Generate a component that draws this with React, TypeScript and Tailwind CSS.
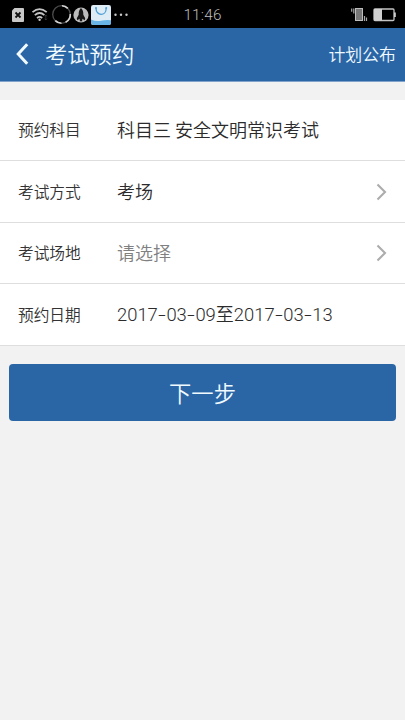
import type { ReactNode } from "react";

interface Field {
  label: string;
  value: ReactNode;
  placeholder?: boolean;
  selectable?: boolean;
}

const fields: Field[] = [
  { label: "预约科目", value: "科目三 安全文明常识考试" },
  { label: "考试方式", value: "考场", selectable: true },
  { label: "考试场地", value: "请选择", placeholder: true, selectable: true },
  {
    label: "预约日期",
    value: (
      <>
        <DateText>2017-03-09</DateText>至<DateText>2017-03-13</DateText>
      </>
    ),
  },
];

// Split on the hyphens so they can be drawn wider than the font's own.
function DateText({ children }: { children: string }) {
  return (
    <span className="font-['Roboto','Liberation_Sans',sans-serif] text-[18.4px]">
      {children.split("-").map((part, i) => (
        <span key={i}>
          {i > 0 && <span className="inline-block w-[8.6px] origin-left scale-x-150">-</span>}
          {part}
        </span>
      ))}
    </span>
  );
}

function StatusBar() {
  return (
    <div className="grid h-7 shrink-0 grid-cols-[1fr_auto_1fr] items-center bg-black text-[#bdbdbd]">
      <svg className="h-7 w-[140px]" viewBox="0 0 140 28" fill="none">
        {/* SIM card */}
        <path d="M14.5 7H23a1 1 0 0 1 1 1v12a1 1 0 0 1-1 1H13a1 1 0 0 1-1-1V9.5z" fill="#c9c9c9" />
        <path d="m15.5 11.5 5 5m0-5-5 5" stroke="#111" strokeWidth="1.8" />
        {/* Wi-Fi */}
        <path d="M32.5 11.2q7-6.2 14.2 0M34.8 14.2q4.9-4.4 9.6 0M37 17.1q2.6-2.3 5.2 0" stroke="#c4c4c4" strokeWidth="1.7" />
        <circle cx="39.6" cy="18.8" r="1.2" fill="#c9c9c9" />
        <path d="M45.8 14v5m-1.2-3.7 1.2-1.3 1.2 1.3m-2.4 2.4 1.2 1.3 1.2-1.3" stroke="#444" strokeWidth="0.7" />
        {/* Loading ring */}
        <circle cx="61.5" cy="13.5" r="8.8" stroke="#4d4d4d" strokeWidth="1.3" />
        <path d="M62 4.7a8.8 8.8 0 0 1 5.8 2.7M70.3 13a8.8 8.8 0 0 1-4.7 8.3M61.5 22.3a8.8 8.8 0 0 1-6.2-2.7" stroke="#d2d2d2" strokeWidth="1.6" />
        {/* Rocket */}
        <circle cx="81" cy="14" r="7.6" fill="#bcbcbc" />
        <path d="M81 7c2 1.8 2.4 4.2 2.3 6.7l1.9 3.5-.5 2-2.3-1.4-.3 2.5h-2.2l-.3-2.5-2.3 1.4-.5-2 1.9-3.5C78.6 11.2 79 8.8 81 7Z" fill="#171717" />
        {/* Shopping bag */}
        <rect x="91" y="4" width="20" height="20" rx="2.2" fill="#ddecf5" />
        <path d="M91 18.5q5 2.2 10 1.2t10-.5v2.6a2.2 2.2 0 0 1-2.2 2.2H93.2a2.2 2.2 0 0 1-2.2-2.2z" fill="#69b4e5" />
        <path d="M96 7.2c0 8.2 10.2 8.2 10.2 0" stroke="#4a9ed6" strokeWidth="1.3" />
        <circle cx="96" cy="7" r="1" fill="#4a9ed6" />
        <circle cx="106.2" cy="7" r="1" fill="#4a9ed6" />
        <g fill="#c9c9c9">
          <circle cx="115.5" cy="13.7" r="1.2" />
          <circle cx="121" cy="13.7" r="1.2" />
          <circle cx="126.5" cy="13.7" r="1.2" />
        </g>
      </svg>
      <span className="pt-px font-['Roboto','Liberation_Sans',sans-serif] text-[15.3px] leading-7 font-light tracking-[0.2px]">
        11:46
      </span>
      <svg className="h-7 w-[60px] justify-self-end" viewBox="345 0 60 28" fill="none">
        {/* Vibrating phone */}
        <path d="M351.7 7.5v3.3M353.8 7.5v5M364.5 15v5M366.5 16.5V20" stroke="#aaa" strokeWidth="1.2" />
        <rect x="355.5" y="7.5" width="7" height="12" fill="#777" stroke="#bdbdbd" />
        {/* Battery */}
        <rect x="374" y="8" width="20" height="11.5" rx="1" stroke="#c4c4c4" strokeWidth="1.3" />
        <path d="M374 8h8v11.5h-8zM394 11.5h1.8v4.5H394z" fill="#d0d0d0" />
      </svg>
    </div>
  );
}

function Header() {
  return (
    <header className="flex h-[54px] shrink-0 items-center border-b border-[#7fa3cb] bg-[#2a66a6] pr-[9px] pb-px pl-[15px] text-[#f1faff]">
      <button aria-label="返回" className="mr-[15px] flex">
        <svg className="h-6 w-[15px]" viewBox="0 0 15 24" fill="none">
          <path d="M12.2 2.2 3.2 12l9 9.8" stroke="currentColor" strokeWidth="3" />
        </svg>
      </button>
      <h1 className="pb-0.5 text-[22.3px] leading-8">考试预约</h1>
      <button className="ml-auto text-[16.9px] leading-6">计划公布</button>
    </header>
  );
}

function FieldRow({ label, value, placeholder, selectable }: Field) {
  return (
    <div className="flex h-[61.45px] items-center border-b border-[#dedede] pr-[18px] pl-[18px]">
      <span className="w-[99px] text-[15.7px] leading-6 text-[#333]">{label}</span>
      <span
        className={`flex-1 pb-0.5 text-[18px] leading-6 whitespace-nowrap ${placeholder ? "text-[#808080]" : "text-[#2b2b2b]"}`}
      >
        {value}
      </span>
      {selectable && (
        <svg className="h-[18px] w-[11px]" viewBox="0 0 11 18" fill="none">
          <path d="m1.5 1.5 7.5 7.5-7.5 7.5" stroke="#acacac" strokeWidth="2.1" />
        </svg>
      )}
    </div>
  );
}

export default function App() {
  return (
    <main className="flex h-[720px] w-[405px] flex-col overflow-hidden bg-[#f2f2f2] font-['Noto_Sans_CJK_SC_DemiLight','Noto_Sans_CJK_SC',sans-serif] font-[350]">
      <StatusBar />
      <Header />
      <section className="mt-[18px] bg-white">
        {fields.map((field) => (
          <FieldRow key={field.label} {...field} />
        ))}
      </section>
      <button className="mx-[9px] mt-[18.2px] h-[57.5px] rounded-[4px] bg-[#2a66a6] pb-0.5 text-[22.3px] leading-8 text-[#f1faff]">
        下一步
      </button>
    </main>
  );
}
